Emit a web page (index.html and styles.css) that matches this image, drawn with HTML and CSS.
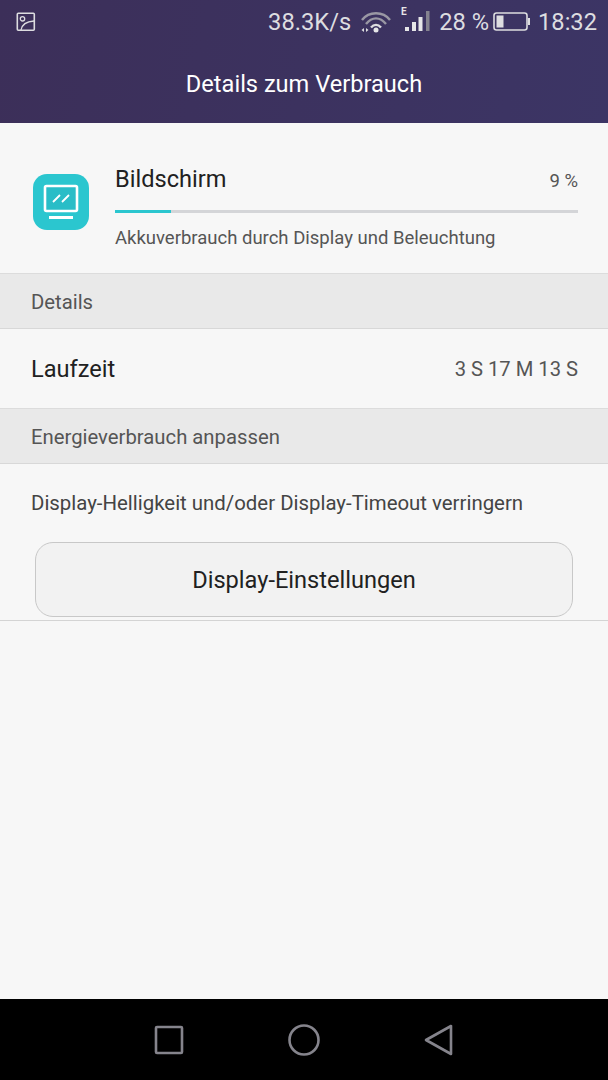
FILE: index.html
```html
<!DOCTYPE html>
<html lang="de">
  <head>
    <meta charset="UTF-8">
    <title>Details zum Verbrauch</title>
    <link rel="stylesheet" href="styles.css">
  </head>
  <body>
    <header class="top">
      <div class="status">
        <svg class="pic" width="20" height="20" viewBox="0 0 20 20" fill="none" stroke="#dddde0" stroke-width="1.6">
          <rect x="1.3" y="1.3" width="17" height="17" rx="1"/>
          <circle cx="6.500" cy="6.800" r="2.200" stroke-width="1.300"/>
          <path d="M5 18c1-6 6-8.500 13-9" stroke-width="1.300"/>
        </svg>
        <span class="speed">38.3K/s</span>
        <svg class="wifi" width="30" height="22" viewBox="0 0 30 22" fill="none" stroke="#9a98a4" stroke-width="2.400">
          <path d="M1 9C8 0 22 0 29 9"/>
          <path d="M5 13C11 5.500 19 5.500 25 13"/>
          <path d="M10 16.500C13 13 17 13 20 16.500" stroke="#dddde0"/>
          <circle cx="15" cy="19" r="2.500" fill="#e6e6e8" stroke="none"/>
          <path d="M3 17v4l-2.500-2zM5 17v4l2.500-2z" fill="#dddde0" stroke="none"/>
        </svg>
        <svg class="signal" width="29" height="44" viewBox="0 0 29 44">
          <text x="0" y="15" class="edge">E</text>
          <rect x="4" y="27" width="4" height="4" fill="#e6e6e8"/>
          <rect x="11" y="22" width="4" height="9" fill="#e6e6e8"/>
          <rect x="17.500" y="17" width="4" height="14" fill="#e6e6e8"/>
          <rect x="25" y="11" width="3.500" height="20" fill="#85838f"/>
        </svg>
        <span class="pct">28 %</span>
        <svg class="batt" width="38" height="20" viewBox="0 0 38 20" fill="none">
          <rect x="1" y="1" width="33" height="17" rx="2.500" stroke="#dddde0" stroke-width="1.600"/>
          <rect x="3.500" y="3.500" width="7" height="12" fill="#dddde0"/>
          <path d="M36 6v7" stroke="#dddde0" stroke-width="2"/>
        </svg>
        <span class="clock">18:32</span>
      </div>
      <h1 class="title">Details zum Verbrauch</h1>
    </header>

    <main class="content">
      <section class="usage">
        <div class="app-icon">
          <svg width="56" height="56" viewBox="0 0 56 56" fill="none" stroke="#fff">
            <rect x="12" y="12" width="32" height="25" rx="1.500" fill="#29bdc7" stroke-width="2.600"/>
            <path d="M20 28l7-7M29 28l7-7" stroke-width="1.800"/>
            <path d="M16 43.500h24" stroke-width="3"/>
          </svg>
        </div>
        <div class="usage-body">
          <div class="usage-head">
            <span class="usage-name">Bildschirm</span>
            <span class="usage-pct">9 %</span>
          </div>
          <div class="bar"><div class="bar-fill" style="width: 12%"></div></div>
          <p class="usage-desc">Akkuverbrauch durch Display und Beleuchtung</p>
        </div>
      </section>

      <h2 class="section">Details</h2>
      <div class="row">
        <span class="row-name">Laufzeit</span>
        <span class="row-value">3 S 17 M 13 S</span>
      </div>

      <h2 class="section">Energieverbrauch anpassen</h2>
      <div class="advice">
        <p class="advice-text">Display-Helligkeit und/oder Display-Timeout verringern</p>
        <button class="btn">Display-Einstellungen</button>
      </div>
    </main>

    <nav class="navbar">
      <svg width="30" height="30" viewBox="0 0 30 30" fill="none" stroke="#85848c" stroke-width="2.600" stroke-linejoin="round">
        <rect x="2" y="2" width="26" height="26" rx="1"/>
      </svg>
      <svg width="32" height="32" viewBox="0 0 32 32" fill="none" stroke="#85848c" stroke-width="2.600">
        <circle cx="16" cy="16" r="14.500"/>
      </svg>
      <svg width="30" height="32" viewBox="0 0 30 32" fill="none" stroke="#85848c" stroke-width="2.600" stroke-linejoin="round">
        <path d="M27 2v28L2 16z"/>
      </svg>
    </nav>
  </body>
</html>
```

FILE: styles.css
```css
* {
  margin: 0;
  padding: 0;
  box-sizing: border-box;
}

body {
  width: 608px;
  height: 1080px;
  display: flex;
  flex-direction: column;
  overflow: hidden;
  font-family: Roboto, "Noto Sans", sans-serif;
  background-color: #f7f7f7;
}

.top {
  height: 123px;
  flex: none;
  background: linear-gradient(100deg, #3c2f59, #3c3565);
  color: #fff;
}

.status {
  height: 44px;
  display: flex;
  align-items: center;
  padding: 0 11px 0 16px;
  font-size: 23.700px;
  color: #dddde0;
}

.speed {
  margin-left: auto;
  margin-right: 10px;
}

.wifi {
  margin-right: 10px;
}

.signal {
  margin-right: 9px;
}

.edge {
  font-size: 10px;
  font-weight: 700;
  fill: #e6e6e8;
}

.pct {
  margin-right: 4px;
}

.batt {
  margin-right: 7px;
}

.title {
  margin-top: 20px;
  text-align: center;
  font-size: 23.600px;
  font-weight: 400;
  line-height: 40px;
}

.content {
  flex: 1;
  color: #212121;
}

.usage {
  height: 150px;
  display: flex;
  align-items: flex-start;
  padding: 41px 30px 0 33px;
  gap: 26px;
}

.app-icon {
  width: 56px;
  height: 56px;
  flex: none;
  margin-top: 10px;
  border-radius: 14px;
  background-color: #2bc6cf;
}

.usage-body {
  flex: 1;
}

.usage-head {
  display: flex;
  align-items: baseline;
  justify-content: space-between;
}

.usage-name {
  font-size: 23.600px;
  line-height: 30px;
}

.usage-pct {
  font-size: 18.500px;
  color: #555;
}

.bar {
  height: 3px;
  margin-top: 16px;
  background-color: #d4d5d8;
}

.bar-fill {
  height: 100%;
  background-color: #2bc6cf;
}

.usage-desc {
  margin-top: 13px;
  font-size: 18.500px;
  line-height: 24px;
  color: #555;
}

.section {
  height: 56px;
  padding-left: 31px;
  font-size: 20.300px;
  font-weight: 400;
  line-height: 56px;
  color: #555;
  background-color: #e9e9e9;
  border-top: 1px solid #dcdcdc;
  border-bottom: 1px solid #d8d8d8;
}

.row {
  height: 79px;
  display: flex;
  align-items: center;
  justify-content: space-between;
  padding: 1px 30px 0 31px;
}

.row-name {
  font-size: 23.600px;
}

.row-value {
  font-size: 20.200px;
  color: #555;
}

.advice {
  height: 157px;
  padding-top: 27px;
  border-bottom: 1px solid #d4d4d4;
}

.advice-text {
  padding-left: 31px;
  font-size: 20.400px;
  line-height: 25px;
  color: #444;
}

.btn {
  display: block;
  width: 538px;
  height: 75px;
  margin: 26px 0 0 35px;
  font-family: inherit;
  font-size: 23.600px;
  color: #212121;
  background-color: #f2f2f2;
  border: 1px solid #c8c8c8;
  border-radius: 18px;
}

.navbar {
  height: 81px;
  flex: none;
  display: flex;
  align-items: center;
  justify-content: center;
  gap: 104px;
  background-color: #000;
}
```
